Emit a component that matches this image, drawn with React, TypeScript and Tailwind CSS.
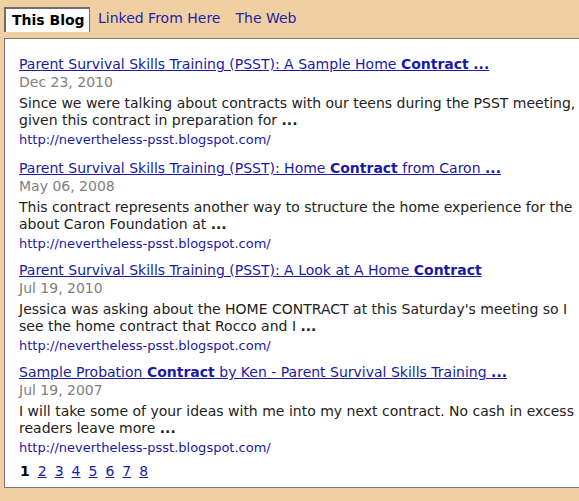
import React from "react";

const font = { fontFamily: '"DejaVu Sans", Verdana, sans-serif' };

type R = {
  title: React.ReactNode;
  date: string;
  l1: string;
  l2: string;
};

const results: R[] = [
  {
    title: (
      <>
        Parent Survival Skills Training (PSST): A Sample Home <b>Contract</b> <b>...</b>
      </>
    ),
    date: "Dec 23, 2010",
    l1: "Since we were talking about contracts with our teens during the PSST meeting,",
    l2: "given this contract in preparation for",
  },
  {
    title: (
      <>
        Parent Survival Skills Training (PSST): Home <b>Contract</b> from Caron <b>...</b>
      </>
    ),
    date: "May 06, 2008",
    l1: "This contract represents another way to structure the home experience for the",
    l2: "about Caron Foundation at",
  },
  {
    title: (
      <>
        Parent Survival Skills Training (PSST): A Look at A Home <b>Contract</b>
      </>
    ),
    date: "Jul 19, 2010",
    l1: "Jessica was asking about the HOME CONTRACT at this Saturday's meeting so I",
    l2: "see the home contract that Rocco and I",
  },
  {
    title: (
      <>
        Sample Probation <b>Contract</b> by Ken - Parent Survival Skills Training <b>...</b>
      </>
    ),
    date: "Jul 19, 2007",
    l1: "I will take some of your ideas with me into my next contract. No cash in excess",
    l2: "readers leave more",
  },
];

export default function App() {
  return (
    <div
      className="w-[579px] h-[501px] overflow-hidden bg-[#f0d0a2] text-[14px]"
      style={font}
    >
      <div className="flex items-end pt-[7px] pl-[4px]">
        <div className="h-[25px] w-[86px] bg-white border-t-2 border-l-2 border-r border-[#6e6e6e] pl-[6px] font-bold text-black leading-[22px] text-[14px]">
          This Blog
        </div>
        <a className="ml-[8px] leading-[22px] text-[14px] text-[#2222aa] h-[25px]">Linked From Here</a>
        <a className="ml-[15px] leading-[22px] text-[14px] text-[#2222aa] h-[25px]">The Web</a>
      </div>
      <div className="mt-[6px] ml-[4px] w-[800px] h-[450px] bg-white border border-[#7a7a7a] pl-[14px] pt-[17px]">
        {results.map((r, i) => (
          <div key={i} className={i === 0 ? "mb-[12px]" : "mb-[10px]"}>
            <a className="block whitespace-nowrap leading-[17px] text-[#1a1aa6] underline">
              {r.title}
            </a>
            <div className="leading-[18px] text-[#808080]">{r.date}</div>
            <div className="mt-[4px] leading-[17px] text-[#222222]">
              <div className="whitespace-nowrap">{r.l1}</div>
              <div className="whitespace-nowrap">
                {r.l2} <b>...</b>
              </div>
            </div>
            <div className="mt-[3px] leading-[16px] text-[13px] text-[#1a1aa6]">
              http://nevertheless-psst.blogspot.com/
            </div>
          </div>
        ))}
        <div className="flex gap-[8px] leading-[17px] -mt-[3px] pl-[1px]">
          <b className="text-black">1</b>
          {["2", "3", "4", "5", "6", "7", "8"].map((n) => (
            <a key={n} className="text-[#1a1aa6] underline">
              {n}
            </a>
          ))}
        </div>
      </div>
    </div>
  );
}
